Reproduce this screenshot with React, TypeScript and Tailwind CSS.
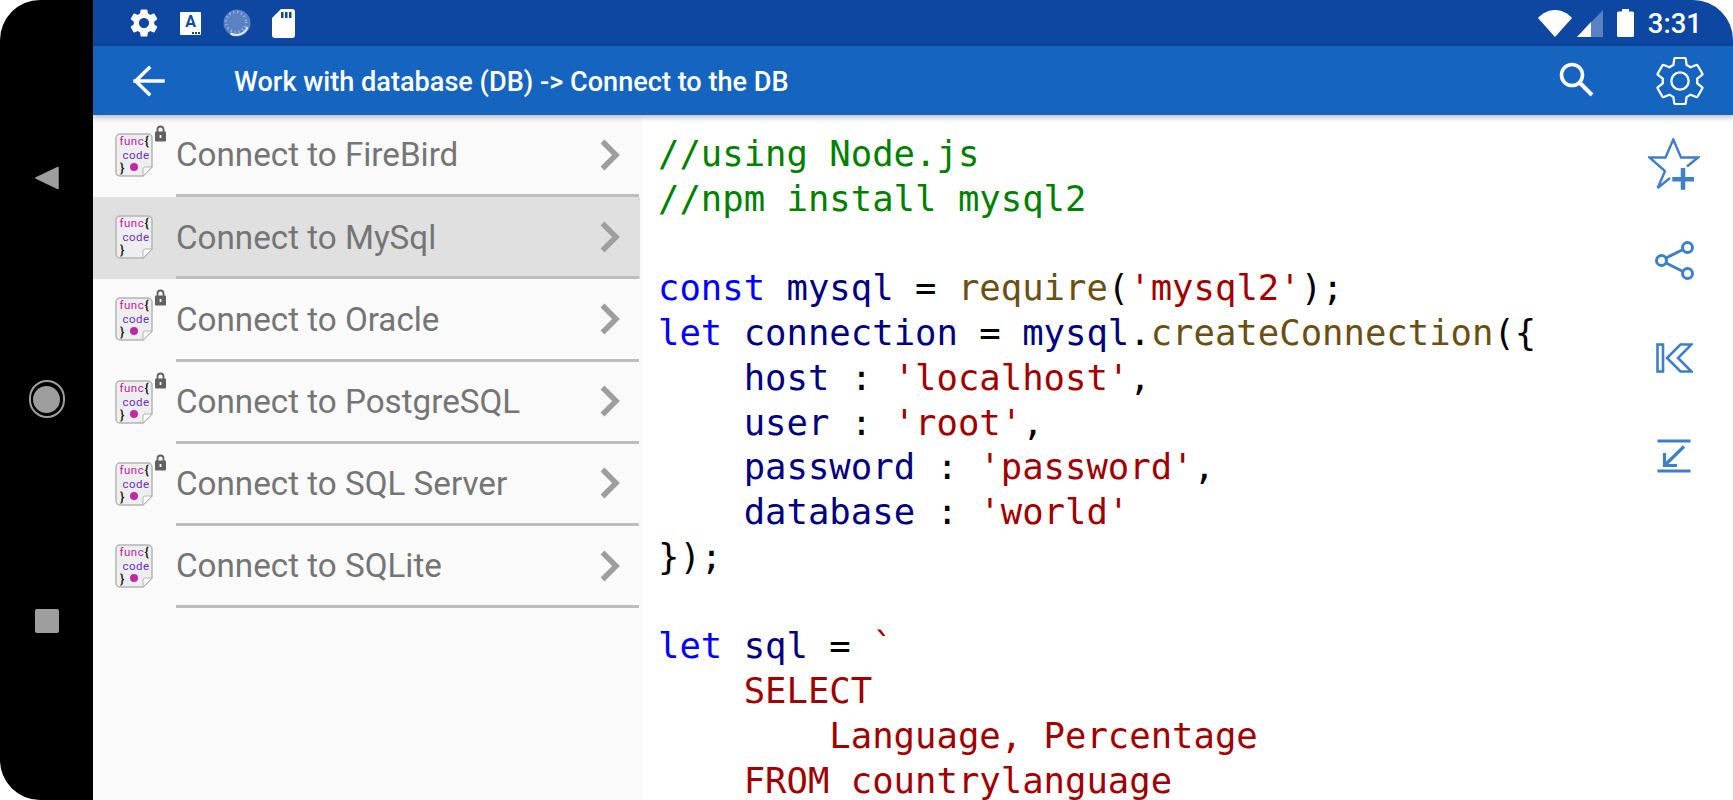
import React from 'react'

const gearPath =
  'M19.14,12.94c0.04-0.3,0.06-0.61,0.06-0.94c0-0.32-0.02-0.64-0.07-0.94l2.03-1.58c0.18-0.14,0.23-0.41,0.12-0.61 l-1.92-3.32c-0.12-0.22-0.37-0.29-0.59-0.22l-2.39,0.96c-0.5-0.38-1.03-0.7-1.62-0.94L14.4,2.81c-0.04-0.24-0.24-0.41-0.48-0.41 h-3.84c-0.24,0-0.43,0.17-0.47,0.41L9.25,5.35C8.66,5.59,8.12,5.92,7.63,6.29L5.24,5.33c-0.22-0.08-0.47,0-0.59,0.22L2.74,8.87 C2.62,9.08,2.66,9.34,2.86,9.48l2.03,1.58C4.84,11.36,4.8,11.69,4.8,12s0.02,0.64,0.07,0.94l-2.03,1.58 c-0.18,0.14-0.23,0.41-0.12,0.61l1.92,3.32c0.12,0.22,0.37,0.29,0.59,0.22l2.39-0.96c0.5,0.38,1.03,0.7,1.62,0.94l0.36,2.54 c0.05,0.24,0.24,0.41,0.48,0.41h3.84c0.24,0,0.44-0.17,0.47-0.41l0.36-2.54c0.59-0.24,1.13-0.56,1.62-0.94l2.39,0.96 c0.22,0.08,0.47,0,0.59-0.22l1.92-3.32c0.12-0.22,0.07-0.47-0.12-0.61L19.14,12.94z'

const items = [
  { name: 'Connect to FireBird', locked: true, dot: true },
  { name: 'Connect to MySql', locked: false, dot: false, active: true },
  { name: 'Connect to Oracle', locked: true, dot: true },
  { name: 'Connect to PostgreSQL', locked: true, dot: true },
  { name: 'Connect to SQL Server', locked: true, dot: true },
  { name: 'Connect to SQLite', locked: false, dot: true },
]

type Tok = [string, string]
const G = 'text-[#008000]'
const K = 'text-[#0000ff]'
const N = 'text-[#000080]'
const F = 'text-[#6b4f12]'
const S = 'text-[#a00000]'
const P = 'text-black'

const code: Tok[][] = [
  [['//using Node.js', G]],
  [['//npm install mysql2', G]],
  [],
  [['const', K], [' ', P], ['mysql', N], [' = ', P], ['require', F], ['(', P], ["'mysql2'", S], [');', P]],
  [['let', K], [' ', P], ['connection', N], [' = ', P], ['mysql', N], ['.', P], ['createConnection', F], ['({', P]],
  [['    ', P], ['host', N], [' : ', P], ["'localhost'", S], [',', P]],
  [['    ', P], ['user', N], [' : ', P], ["'root'", S], [',', P]],
  [['    ', P], ['password', N], [' : ', P], ["'password'", S], [',', P]],
  [['    ', P], ['database', N], [' : ', P], ["'world'", S]],
  [['});', P]],
  [],
  [['let', K], [' ', P], ['sql', N], [' = ', P], ['`', S]],
  [['    SELECT', S]],
  [['        Language, Percentage', S]],
  [['    FROM countrylanguage', S]],
]

const FuncIcon = ({ dot }: { dot: boolean }) => (
  <svg width="38" height="44" viewBox="0 0 38 44" className="shrink-0">
    <path d="M5 1h28a4 4 0 0 1 4 4v29l-9 9H5a4 4 0 0 1-4-4V5a4 4 0 0 1 4-4z" fill="#eeeeee" stroke="#b5b5b5" strokeWidth="1.5" />
    <path d="M37 34h-7a2 2 0 0 0-2 2v7z" fill="#fafafa" stroke="#b5b5b5" strokeWidth="1" />
    <text x="4.5" y="12" fontFamily="Roboto, sans-serif" fontSize="11.5" letterSpacing="0.5" fill="#c2189f">func</text>
    <text x="29.5" y="13" fontFamily="Roboto, sans-serif" fontWeight="500" fontSize="13" fill="#111">{'{'}</text>
    <text x="7.5" y="26" fontFamily="Roboto, sans-serif" fontSize="11.5" letterSpacing="0.5" fill="#6a2fc0">code</text>
    <text x="5" y="39" fontFamily="Roboto, sans-serif" fontWeight="500" fontSize="13" fill="#111">{'}'}</text>
    {dot && <circle cx="19" cy="34" r="4" fill="#c427a6" />}
  </svg>
)

const LockIcon = () => (
  <svg width="13" height="17" viewBox="0 0 13 17" className="absolute left-[39px] top-[-8px]">
    <path d="M3.5 7V4.5a3 3 0 0 1 6 0V7" fill="none" stroke="#616161" strokeWidth="1.8" />
    <rect x="1" y="6.5" width="11" height="10" rx="1" fill="#616161" />
    <rect x="5.6" y="10" width="1.8" height="3" fill="#fafafa" />
  </svg>
)

export default function App() {
  return (
    <div className="flex h-[800px] w-[1733px] overflow-hidden bg-white font-['Roboto',sans-serif]">
      {/* nav bar on the left of the device */}
      <div className="flex h-full w-[93px] shrink-0 flex-col items-center gap-[190px] rounded-l-[40px] bg-black pt-[166px]">
        <svg width="24" height="24" viewBox="0 0 24 24">
          <path d="M23 1.5v21L1 12z" fill="#9e9e9e" stroke="#9e9e9e" strokeWidth="1.5" strokeLinejoin="round" />
        </svg>
        <div className="flex h-[38px] w-[36px] items-center justify-center rounded-full border-2 border-[#9e9e9e]">
          <div className="h-[27px] w-[27px] rounded-full bg-[#9e9e9e]" />
        </div>
        <div className="mt-px h-[24px] w-[24px] rounded-[2px] bg-[#9e9e9e]" />
      </div>

      <div className="flex h-full min-w-0 flex-1 flex-col">
        {/* status bar */}
        <div className="flex h-[46px] shrink-0 items-center rounded-tr-[40px] bg-[#0d47a1] pl-[34px] pr-[31px] text-white">
          <svg width="34" height="34" viewBox="0 0 24 24" fill="#fff" className="mr-[19px]">
            <path fillRule="evenodd" d={gearPath + ' M12,15.6c-1.98,0-3.6-1.62-3.6-3.6s1.62-3.6,3.6-3.6s3.6,1.62,3.6,3.6S13.98,15.6,12,15.6z'} />
          </svg>
          <div className="relative mr-[22px] flex h-[23px] w-[21px] items-start justify-center rounded-[1px] bg-white text-[16px] font-bold leading-[19px] text-[#0d47a1]">
            A
            <div className="absolute bottom-[1px] right-[1px] flex gap-px">
              <div className="h-[2px] w-[2px] bg-[#0d47a1]" />
              <div className="h-[2px] w-[2px] bg-[#0d47a1]" />
              <div className="h-[2px] w-[2px] bg-[#0d47a1]" />
            </div>
          </div>
          <svg width="28" height="28" viewBox="0 0 28 28" className="mr-[21px]">
            <circle cx="14" cy="14" r="13.5" fill="#5a82c2" />
            <path d="M24.5 18a12 12 0 0 1-17 6.5" fill="none" stroke="#e6ecf6" strokeWidth="2" />
            <circle cx="13" cy="13" r="10" fill="none" stroke="#a9bfe2" strokeWidth="2.5" strokeDasharray="1 3" />
          </svg>
          <svg width="23" height="29" viewBox="0 0 23 29" className="mb-[-1px]">
            <path d="M9 0h11a3 3 0 0 1 3 3v23a3 3 0 0 1-3 3H3a3 3 0 0 1-3-3V9z" fill="#fff" />
            <path d="M9 3h2.5v6H9zM13 3h2.5v6H13zM17 3h2.5v6H17z" fill="#0d47a1" />
          </svg>
          <div className="flex-1" />
          <svg width="34" height="27" viewBox="0 0 34 27" className="mr-[5px]">
            <path d="M0 8C4.5 3 10.5 0 17 0s12.5 3 17 8L17 27z" fill="#fff" />
          </svg>
          <svg width="26" height="27" viewBox="0 0 26 27" className="mr-[14px]">
            <path d="M26 0v27H0z" fill="#5a82c2" />
            <path d="M14 12v15H0z" fill="#fff" />
          </svg>
          <svg width="17" height="28" viewBox="0 0 17 28" className="mr-[14px]">
            <path d="M5 0h7v2.5h3.5a1.5 1.5 0 0 1 1.5 1.5v22.5a1.5 1.5 0 0 1-1.5 1.5h-14A1.5 1.5 0 0 1 0 26.5V4a1.5 1.5 0 0 1 1.5-1.5H5z" fill="#fff" />
          </svg>
          <span className="mt-[2px] text-[27.5px] font-medium leading-none">3:31</span>
        </div>

        {/* app bar */}
        <div className="relative z-10 flex h-[69px] shrink-0 items-center bg-[#1565c0] pl-[38px] pr-[29px] text-white shadow-[0_2px_6px_rgba(0,0,0,0.3)]">
          <svg width="36" height="36" viewBox="0 0 36 36" fill="none" stroke="#fff" strokeWidth="3.4" strokeLinecap="square" className="mr-[67px] mt-[1px]">
            <path d="M4 18h28M18 5L4.5 18 18 31" />
          </svg>
          <h1 className="mt-[5px] text-[27.1px] font-medium leading-none">Work with database (DB) -&gt; Connect to the DB</h1>
          <div className="flex-1" />
          <svg width="36" height="36" viewBox="0 0 36 36" fill="none" stroke="#fff" className="mb-[4px] mr-[62px]">
            <circle cx="14" cy="14" r="10.5" strokeWidth="3.6" />
            <path d="M22 22l12 12" strokeWidth="4" />
          </svg>
          <svg width="48" height="48" viewBox="2 2 20 20" fill="none" stroke="#fff" strokeWidth="0.95">
            <path d={gearPath} />
            <circle cx="12" cy="12" r="3.6" />
          </svg>
        </div>

        <div className="flex min-h-0 flex-1">
          {/* list */}
          <div className="w-[549px] shrink-0 bg-[#fafafa]">
            {items.map((item) => (
              <div key={item.name} className={`flex h-[82.2px] w-[547px] items-stretch ${item.active ? 'bg-[#e0e0e0]' : ''}`}>
                <div className="flex w-[83px] shrink-0 items-center pl-[22px]">
                  <div className="relative mt-[-2px]">
                    <FuncIcon dot={item.dot} />
                    {item.locked && <LockIcon />}
                  </div>
                </div>
                <div className="mr-px flex flex-1 items-center justify-between border-b-[3px] border-[#bdbdbd] pr-[19px]">
                  <span className="mt-[1px] text-[33.2px] leading-none text-[#757575]">{item.name}</span>
                  <svg width="20" height="32" viewBox="0 0 20 32" fill="none" stroke="#9e9e9e" strokeWidth="5.5">
                    <path d="M2.5 2.5L16 16 2.5 29.5" />
                  </svg>
                </div>
              </div>
            ))}
          </div>

          {/* code */}
          <div className="min-w-0 flex-1 overflow-hidden pl-[16px] pt-[17px] font-['DejaVu_Sans_Mono',monospace] text-[35.6px] leading-[44.75px]">
            {code.map((line, i) => (
              <div key={i} className="h-[44.75px] whitespace-pre">
                {line.map(([text, color], j) => (
                  <span key={j} className={color}>{text}</span>
                ))}
              </div>
            ))}
          </div>

          {/* side actions */}
          <div className="flex w-[116px] shrink-0 flex-col items-center border-r-2 border-[#fafafa] text-[#3d7fc9]">
            <div className="flex h-[97px] items-center">
              <svg width="52" height="52" viewBox="0 0 52 52" fill="none" stroke="currentColor">
                <path d="M22 40L9.7 50 17 33 1.5 19.5h16L25.3 1.5 33 19.5h17L39 28.5" strokeWidth="2.4" />
                <path d="M24.3 41.3H46M35 30v21.7" strokeWidth="4.5" />
              </svg>
            </div>
            <div className="flex h-[97px] items-center">
              <svg width="39" height="39" viewBox="0 0 39 39" fill="none" stroke="currentColor" strokeWidth="3">
                <circle cx="6.5" cy="19.5" r="5" />
                <circle cx="32.5" cy="6.5" r="5" />
                <circle cx="32.5" cy="32.5" r="5" />
                <path d="M11 17l17-8.5M11 22l17 8.5" />
              </svg>
            </div>
            <div className="flex h-[97px] items-center">
              <svg width="37" height="30" viewBox="0 0 37 30" fill="none" stroke="currentColor" strokeWidth="2.6" className="mt-[1px]">
                <rect x="1.5" y="1.5" width="5.5" height="27" />
                <path d="M35.5 1.5H24.5L11 15l13.5 13.5h11L22 15z" />
              </svg>
            </div>
            <div className="flex h-[97px] items-center">
              <svg width="34" height="34" viewBox="0 0 34 34" fill="none" stroke="currentColor" strokeWidth="3.2" className="mt-[2px]">
                <path d="M0.5 2h33M0.5 32h33M27 7.5L7.5 26.5M7.5 14v12.5H20" />
              </svg>
            </div>
          </div>
        </div>
      </div>
    </div>
  )
}
